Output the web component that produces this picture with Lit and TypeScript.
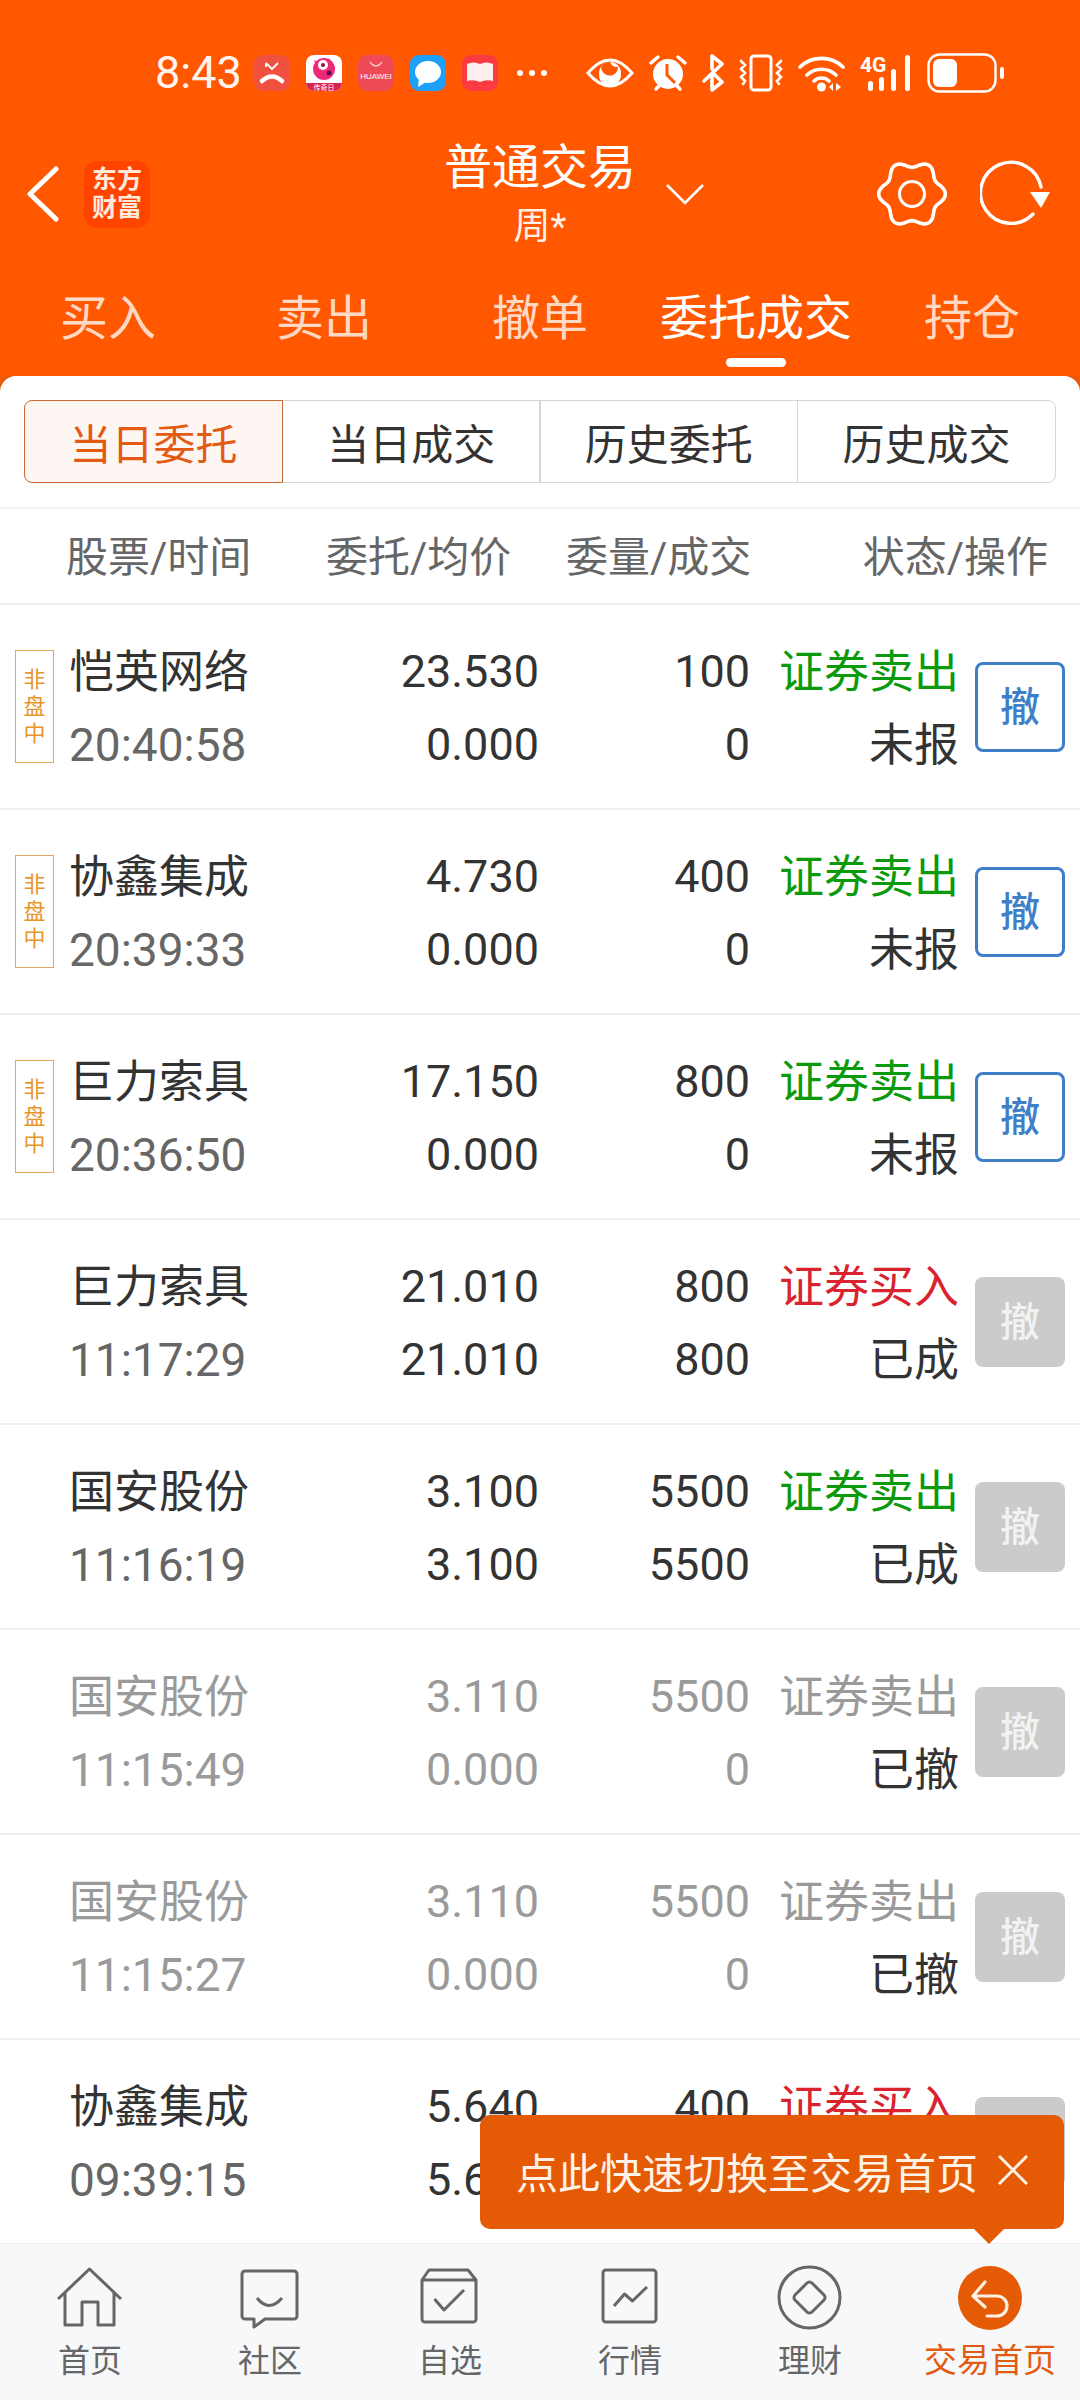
import {LitElement, css, html} from 'lit';
import {customElement} from 'lit/decorators.js';

interface Order {
  name: string;
  time: string;
  price: string;
  avg: string;
  qty: string;
  done: string;
  side: '证券卖出' | '证券买入';
  state: string;
  pending?: boolean; // after-hours order, still cancellable
  dim?: boolean; // cancelled order, greyed out
}

const ORDERS: Order[] = [
  {name: '恺英网络', time: '20:40:58', price: '23.530', avg: '0.000', qty: '100', done: '0', side: '证券卖出', state: '未报', pending: true},
  {name: '协鑫集成', time: '20:39:33', price: '4.730', avg: '0.000', qty: '400', done: '0', side: '证券卖出', state: '未报', pending: true},
  {name: '巨力索具', time: '20:36:50', price: '17.150', avg: '0.000', qty: '800', done: '0', side: '证券卖出', state: '未报', pending: true},
  {name: '巨力索具', time: '11:17:29', price: '21.010', avg: '21.010', qty: '800', done: '800', side: '证券买入', state: '已成'},
  {name: '国安股份', time: '11:16:19', price: '3.100', avg: '3.100', qty: '5500', done: '5500', side: '证券卖出', state: '已成'},
  {name: '国安股份', time: '11:15:49', price: '3.110', avg: '0.000', qty: '5500', done: '0', side: '证券卖出', state: '已撤', dim: true},
  {name: '国安股份', time: '11:15:27', price: '3.110', avg: '0.000', qty: '5500', done: '0', side: '证券卖出', state: '已撤', dim: true},
  {name: '协鑫集成', time: '09:39:15', price: '5.640', avg: '5.640', qty: '400', done: '400', side: '证券买入', state: '已成'},
];

const TABS = ['买入', '卖出', '撤单', '委托成交', '持仓'];
const SEGMENTS = ['当日委托', '当日成交', '历史委托', '历史成交'];

// wavy outline of the settings gear, teeth every 60deg
function gearPath() {
  const pts: string[] = [];
  for (let a = 0; a < 360; a += 5) {
    const t = (a * Math.PI) / 180;
    const r = 30 + 3.4 * Math.cos(6 * t);
    pts.push(`${(35 + r * Math.cos(t)).toFixed(1)} ${(34 + r * Math.sin(t)).toFixed(1)}`);
  }
  return `M${pts.join('L')}Z`;
}

@customElement('app-root')
export class AppRoot extends LitElement {
  static styles = css`
    :host {
      display: block;
      position: relative;
      width: 1080px;
      height: 2400px;
      overflow: hidden;
      background: #fff;
      font-family: Roboto, "Noto Sans CJK SC", sans-serif;
      color: #333;
    }
    .page { display: flex; flex-direction: column; height: 2400px; }
    .top { background: #ff5800; color: #fff; }

    .status { display: flex; align-items: center; height: 40px; padding: 53px 0 27px 155px; }
    .clock { width: 99px; font-size: 45px; line-height: 40px; color: #fff5ee; }
    .notifs { display: flex; gap: 16px; }
    .notifs svg { display: block; }
    .dots { display: flex; gap: 6px; margin: 0 39px 0 19px; }
    .dots i { width: 6px; height: 6px; border-radius: 50%; background: #fff; }
    .sys { display: flex; gap: 15px; align-items: center; }
    .sys svg { display: block; }

    .bar { display: grid; grid-template-columns: 1fr auto 1fr; height: 148px; align-items: center; }
    .bar-left { display: flex; align-items: center; padding-left: 26px; gap: 24px; }
    .logo {
      width: 66px; height: 67px; border-radius: 13px; background: #ff4400;
      display: flex; flex-direction: column; align-items: center; justify-content: center;
      font-size: 25px; line-height: 28px; font-weight: 700; color: #ffe9dc;
    }
    .title { align-self: start; margin-top: 18px; text-align: center; }
    .title b { display: block; font-weight: 400; font-size: 48px; line-height: 60px; }
    .title span { display: block; font-size: 37px; line-height: 58px; color: #fff0e6; }
    .bar-right { display: flex; align-items: center; padding-right: 28px; }
    .down { margin-left: 30px; }
    .gear { margin-left: auto; margin-right: 33px; }

    .tabs { display: grid; grid-template-columns: repeat(5, 216px); height: 87px; padding-top: 21px; }
    .tab { display: flex; flex-direction: column; align-items: center; font-size: 48px; line-height: 60px; color: #ffd9c4; }
    .tab.on { color: #fff; }
    .tab i { width: 60px; height: 9px; margin-top: 9px; border-radius: 5px; }
    .tab.on i { background: #fff; }

    main { flex: 1; min-height: 0; background: #e85a08; }
    .panel { background: #fff; height: 100%; border-radius: 16px 16px 0 0; overflow: hidden; }
    .seg { display: flex; margin: 24px 24px; height: 83px; }
    .seg div {
      flex: 1; display: flex; align-items: center; justify-content: center;
      border: 1.5px solid #d6d6d6; margin-left: -1.5px; font-size: 42px; padding-bottom: 1px;
    }
    .seg div:first-child { margin-left: 0; border-radius: 8px 0 0 8px; }
    .seg div:last-child { border-radius: 0 8px 8px 0; }
    .seg .on { border-color: #c96a35; background: #fef6f2; color: #e35a12; position: relative; }

    .head {
      display: grid; grid-template-columns: 260px 240px 1fr auto; align-items: center;
      padding: 0 32px 6px 66px;
      border-top: 2px solid #f4f4f4; border-bottom: 2px solid #efefef; box-sizing: border-box; height: 98px;
      font-size: 42px; color: #666;
    }

    .row {
      display: grid; grid-template-columns: 69px 231px 239px 211px 209px 90px; align-items: center;
      height: 205px; box-sizing: border-box; border-bottom: 2px solid #efefef;
      font-size: 45px; line-height: 73px;
    }
    .flag {
      width: 39px; height: 113px; box-sizing: border-box; margin-left: 15px;
      border: 1.5px solid #dba95f; display: flex; align-items: center; text-align: center;
      font-size: 22px; line-height: 27px; color: #e8952a; padding: 0 6px;
    }
    .cell { padding-top: 3px; }
    .name, .status-col { position: relative; top: 1px; }
    .num { text-align: right; font-size: 45px; }
    .side-sell { color: #0b9a0b; }
    .side-buy { color: #d9232e; }
    .sub { color: #666; font-size: 46px; position: relative; top: 1px; }
    .status-col { text-align: right; }
    .dim .name, .dim .sub, .dim .num, .dim .side-sell { color: #9a9a9a; }
    .btn {
      width: 90px; height: 90px; box-sizing: border-box; margin-left: 16px; border-radius: 8px;
      display: flex; align-items: center; justify-content: center; padding-top: 3px;
      font-size: 40px; font-weight: 500; line-height: 1;
      background: #cbcbcb; color: #f2f2f2;
    }
    .btn.live { background: #fff; border: 3px solid #3f7fc8; color: #3f7fc8; }

    nav { display: grid; grid-template-columns: repeat(6, 180px); height: 156px; background: #f7f8fa; }
    .item { display: flex; flex-direction: column; align-items: center; padding-top: 21px; }
    .item svg { display: block; }
    .item span { margin-top: 10px; font-size: 32px; line-height: 40px; color: #666; white-space: nowrap; }
    .item.on span { color: #e35a12; font-size: 33px; }

    .tip {
      position: absolute; left: 480px; top: 2115px; width: 584px; height: 114px;
      display: flex; align-items: center; padding: 0 0 4px 36px; box-sizing: border-box;
      background: #e55a05; border-radius: 10px;
      font-size: 42px; color: #fff3e8; white-space: nowrap;
    }
    .tip svg { margin-left: 20px; display: block; }
    .tip::after {
      content: ""; position: absolute; left: 494px; top: 114px;
      border-left: 15px solid transparent; border-right: 15px solid transparent; border-top: 15px solid #e55a05;
    }
  `;

  private statusBar() {
    return html`
      <div class="status">
        <div class="clock">8:43</div>
        <div class="notifs">
          <svg width="36" height="36" viewBox="0 0 36 36">
            <rect width="36" height="36" rx="9" fill="#f0503f"/>
            <path d="M12 8l6 6 6-6M12 8v4" fill="none" stroke="#fff" stroke-width="1.8"/>
            <path d="M8 26q10-9 20 0" fill="none" stroke="#fff" stroke-width="4.500" stroke-linecap="round"/>
          </svg>
          <svg width="36" height="36" viewBox="0 0 36 36">
            <rect width="36" height="36" rx="8" fill="#fff"/>
            <path d="M0 28h36v0a8 8 0 0 1-8 8H8a8 8 0 0 1-8-8z" fill="#d9264f"/>
            <circle cx="18" cy="14" r="11" fill="#ee2a78"/>
            <path d="M8 5l5 3-3 3zM23 3l2 5-4-1z" fill="#ee2a78"/>
            <circle cx="17" cy="10" r="5" fill="#fff"/>
            <circle cx="17" cy="10" r="2" fill="#8a1048"/>
            <circle cx="23" cy="18" r="2.500" fill="#5a0a55"/>
            <text x="18" y="34.500" font-size="7" fill="#fff" text-anchor="middle">传奇日</text>
          </svg>
          <svg width="36" height="36" viewBox="0 0 36 36">
            <rect width="36" height="36" rx="9" fill="#ee4a55"/>
            <path d="M12 7q6 8 12 0" fill="none" stroke="#fff" stroke-width="1.2"/>
            <text x="18" y="24" font-size="8" fill="#fff" text-anchor="middle" font-family="Liberation Sans">HUAWEI</text>
          </svg>
          <svg width="36" height="36" viewBox="0 0 36 36">
            <rect width="36" height="36" rx="9" fill="#1ea1fb"/>
            <ellipse cx="18" cy="17" rx="13" ry="11" fill="#fff"/>
            <path d="M9 23l-1 9 8-5z" fill="#fff"/>
          </svg>
          <svg width="36" height="36" viewBox="0 0 36 36">
            <rect width="36" height="36" rx="9" fill="#fb3a42"/>
            <path d="M5 9q7-3 13 0q6-3 13 0v17q-7-2-13 1q-6-3-13-1z" fill="#ffeeee"/>
          </svg>
        </div>
        <div class="dots"><i></i><i></i><i></i></div>
        <div class="sys">
          <svg width="48" height="36" viewBox="0 0 48 36">
            <path d="M2 18Q24-8 46 18Q24 44 2 18Z" fill="none" stroke="#fff" stroke-width="3"/>
            <circle cx="24" cy="18" r="11" fill="#fff"/>
            <path d="M24 7a11 11 0 0 0-9 5a9 9 0 0 0 12 8a9 9 0 0 0 5-8a8 8 0 0 1-8-5z" fill="#ff5800"/>
            <path d="M13 20a11 11 0 0 0 22 0a14 14 0 0 1-22 0z" fill="#fff"/>
          </svg>
          <svg width="38" height="38" viewBox="0 0 38 38">
            <path d="M2 9l7-6M36 9l-7-6M7 35l4-4M31 35l-4-4" stroke="#fff" stroke-width="3.400" stroke-linecap="round"/>
            <circle cx="19" cy="20" r="15" fill="#fff"/>
            <path d="M18 10v11l8 8" fill="none" stroke="#ff5800" stroke-width="3"/>
          </svg>
          <svg width="22" height="38" viewBox="0 0 22 38">
            <path d="M2 27L20 10 10 2v13M10 22v14l10-8-7-7" fill="none" stroke="#fff" stroke-width="3.600" stroke-linejoin="round" stroke-linecap="round"/>
          </svg>
          <svg width="44" height="38" viewBox="0 0 44 38">
            <rect x="12" y="2" width="20" height="34" rx="3" fill="none" stroke="#fff" stroke-width="3"/>
            <path d="M2 7l4 4-4 4 4 4-4 4 4 4-2 3M42 7l-4 4 4 4-4 4 4 4-4 4 2 3" fill="none" stroke="#fff" stroke-width="2.600" stroke-linecap="round"/>
          </svg>
          <svg width="47" height="38" viewBox="0 0 47 38">
            <path d="M2 13a31 31 0 0 1 43 0M9 21a21 21 0 0 1 29 0M16 27a11 11 0 0 1 15 0" fill="none" stroke="#fff" stroke-width="3.600" stroke-linecap="round"/>
            <circle cx="23.500" cy="33" r="4.500" fill="#fff"/>
            <path d="M35 29v8l-4-4zM38 29v8l5-4z" fill="#fff"/>
          </svg>
          <svg width="52" height="38" viewBox="0 0 52 38">
            <text x="0" y="18" font-size="21" font-weight="700" fill="#fff" font-family="Roboto">4G</text>
            <rect x="8" y="27" width="5" height="10" rx="2.500" fill="#fff"/>
            <rect x="19" y="23" width="5" height="14" rx="2.500" fill="#fff"/>
            <rect x="31" y="15" width="5" height="22" rx="2.500" fill="#fff"/>
            <rect x="45" y="1" width="5" height="36" rx="2.500" fill="#fff"/>
          </svg>
          <svg width="77" height="40" viewBox="0 0 77 40">
            <rect x="1.500" y="1.500" width="67" height="37" rx="11" fill="none" stroke="#fff" stroke-width="2.400"/>
            <rect x="6" y="6" width="24" height="28" rx="6" fill="#fff"/>
            <rect x="73" y="14" width="4" height="12" rx="2" fill="#fff"/>
          </svg>
        </div>
      </div>`;
  }

  private appBar() {
    return html`
      <div class="bar">
        <div class="bar-left">
          <svg width="34" height="56" viewBox="0 0 34 56">
            <path d="M30 3L4 28l26 25" fill="none" stroke="#fff" stroke-width="5" stroke-linecap="round" stroke-linejoin="round"/>
          </svg>
          <div class="logo"><span>东方</span><span>财富</span></div>
        </div>
        <div class="title"><b>普通交易</b><span>周*</span></div>
        <div class="bar-right">
          <svg class="down" width="38" height="22" viewBox="0 0 38 22">
            <path d="M1 2l18 18L37 2" fill="none" stroke="#fff" stroke-width="2.600"/>
          </svg>
          <svg class="gear" width="70" height="68" viewBox="0 0 70 68">
            <path d="${gearPath()}" fill="none" stroke="#fff" stroke-width="3.600" stroke-linejoin="round"/>
            <circle cx="35" cy="34" r="12.500" fill="none" stroke="#fff" stroke-width="3"/>
          </svg>
          <svg width="72" height="68" viewBox="0 0 72 68">
            <path d="M61 27A30.500 30.500 0 1 0 53 54" fill="none" stroke="#fff" stroke-width="3.400" stroke-linecap="round"/>
            <path d="M50 32h20l-9 16z" fill="#fff"/>
          </svg>
        </div>
      </div>`;
  }

  private orderRow(o: Order) {
    const sideClass = o.side === '证券卖出' ? 'side-sell' : 'side-buy';
    return html`
      <div class="row ${o.dim ? 'dim' : ''}">
        <div>${o.pending ? html`<div class="flag">非盘中</div>` : ''}</div>
        <div class="cell"><div class="name">${o.name}</div><div class="sub">${o.time}</div></div>
        <div class="cell num"><div>${o.price}</div><div>${o.avg}</div></div>
        <div class="cell num"><div>${o.qty}</div><div>${o.done}</div></div>
        <div class="cell status-col"><div class=${sideClass}>${o.side}</div><div>${o.state}</div></div>
        <div class="btn ${o.pending ? 'live' : ''}">撤</div>
      </div>`;
  }

  private navBar() {
    return html`
      <nav>
        <div class="item">
          <svg width="72" height="66" viewBox="0 0 72 66" fill="none" stroke="#666" stroke-width="3" stroke-linejoin="round">
            <path d="M4 34L35.500 4 67 34M11 28v32h17V37h16v23h16V28"/>
          </svg>
          <span>首页</span>
        </div>
        <div class="item">
          <svg width="72" height="66" viewBox="0 0 72 66" fill="none" stroke="#666" stroke-width="3" stroke-linejoin="round">
            <path d="M11 6h49a3 3 0 0 1 3 3v42a3 3 0 0 1-3 3H31L20 62v-8h-9a3 3 0 0 1-3-3V9a3 3 0 0 1 3-3z"/>
            <path d="M23 33q12 15 25 0"/>
          </svg>
          <span>社区</span>
        </div>
        <div class="item">
          <svg width="72" height="66" viewBox="0 0 72 66" fill="none" stroke="#666" stroke-width="3" stroke-linejoin="round">
            <path d="M15 5h39l8 10v39a3 3 0 0 1-3 3H11a3 3 0 0 1-3-3V15zM8 15h54"/>
            <path d="M20.500 34L30 45l20-20"/>
          </svg>
          <span>自选</span>
        </div>
        <div class="item">
          <svg width="72" height="66" viewBox="0 0 72 66" fill="none" stroke="#666" stroke-width="3" stroke-linejoin="round">
            <rect x="9" y="5" width="53" height="52" rx="3"/>
            <path d="M20 41l10.500-12 8 7L53 22"/>
          </svg>
          <span>行情</span>
        </div>
        <div class="item">
          <svg width="72" height="66" viewBox="0 0 72 66" fill="none" stroke="#666" stroke-width="3" stroke-linejoin="round">
            <circle cx="35.500" cy="32.500" r="30.500"/>
            <path d="M33 18a3.500 3.500 0 0 1 5 0l12 12a3.500 3.500 0 0 1 0 5L38 47a3.500 3.500 0 0 1-5 0L21 35a3.500 3.500 0 0 1 0-5z"/>
          </svg>
          <span>理财</span>
        </div>
        <div class="item on">
          <svg width="72" height="66" viewBox="0 0 72 66">
            <circle cx="36" cy="33" r="32" fill="#e55a05"/>
            <path d="M31 17L19 31l12 11M19 31h24a10 10 0 0 1 0 20H33" fill="none" stroke="#fff1e4" stroke-width="3.200" stroke-linecap="round" stroke-linejoin="round"/>
          </svg>
          <span>交易首页</span>
        </div>
      </nav>`;
  }

  render() {
    return html`
      <div class="page">
        <div class="top">
          ${this.statusBar()}
          ${this.appBar()}
          <div class="tabs">
            ${TABS.map((t, i) => html`<div class="tab ${i === 3 ? 'on' : ''}">${t}<i></i></div>`)}
          </div>
        </div>
        <main>
          <div class="panel">
            <div class="seg">
              ${SEGMENTS.map((s, i) => html`<div class=${i === 0 ? 'on' : ''}>${s}</div>`)}
            </div>
            <div class="head">
              <span>股票/时间</span><span>委托/均价</span><span>委量/成交</span><span>状态/操作</span>
            </div>
            ${ORDERS.map((o) => this.orderRow(o))}
          </div>
        </main>
        ${this.navBar()}
      </div>
      <div class="tip">
        点此快速切换至交易首页
        <svg width="30" height="30" viewBox="0 0 30 30">
          <path d="M1 1l28 28M29 1L1 29" stroke="#fff3e8" stroke-width="3"/>
        </svg>
      </div>
    `;
  }
}
